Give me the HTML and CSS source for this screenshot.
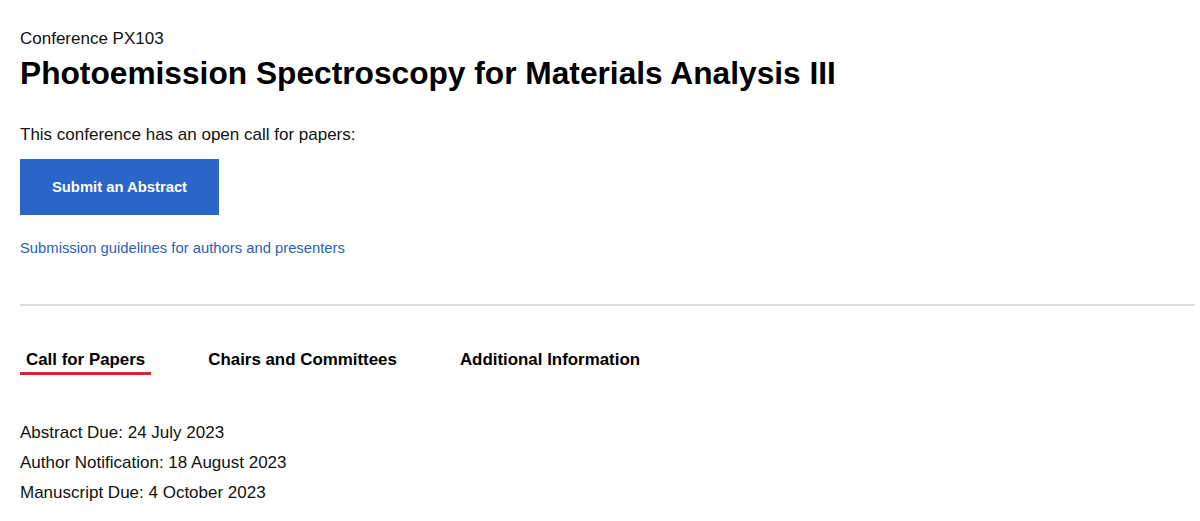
FILE: index.html
```html
<!DOCTYPE html>
<html lang="en">
<head>
<meta charset="utf-8">
<title>Photoemission Spectroscopy for Materials Analysis III</title>
<link rel="stylesheet" href="styles.css">
</head>
<body>
<main class="page">
  <header class="head">
    <div class="code">Conference PX103</div>
    <h1 class="title">Photoemission Spectroscopy for Materials Analysis III</h1>
  </header>
  <section class="cfp">
    <p class="open">This conference has an open call for papers:</p>
    <a class="btn" href="#">Submit an Abstract</a>
    <a class="guide" href="#">Submission guidelines for authors and presenters</a>
  </section>
  <hr class="rule">
  <nav class="tabs">
    <a class="tab active" href="#">Call for Papers</a>
    <a class="tab" href="#">Chairs and Committees</a>
    <a class="tab" href="#">Additional Information</a>
  </nav>
  <ul class="dates">
    <li>Abstract Due: 24 July 2023</li>
    <li>Author Notification: 18 August 2023</li>
    <li>Manuscript Due: 4 October 2023</li>
  </ul>
</main>
</body>
</html>
```

FILE: styles.css
```css
* { box-sizing: border-box; }
html, body { margin: 0; padding: 0; background: #fff; }
body {
  font-family: "Liberation Sans", Arial, Helvetica, sans-serif;
  color: #111;
}
.page {
  padding: 29px 5px 0 20px;
}
.head { display: flex; flex-direction: column; }
.code {
  font-size: 17px;
  line-height: 20px;
}
.title {
  margin: 5px 0 0;
  font-size: 31.7px;
  line-height: 38px;
  font-weight: 700;
  color: #000;
}
.cfp {
  display: flex;
  flex-direction: column;
  align-items: flex-start;
  margin-top: 33px;
}
.open {
  margin: 0;
  font-size: 17px;
  line-height: 20px;
}
.btn {
  margin-top: 14px;
  width: 199px;
  height: 56px;
  display: flex;
  align-items: center;
  justify-content: center;
  background: #2a66c8;
  color: #fff;
  font-weight: 700;
  font-size: 14.8px;
  text-decoration: none;
}
.guide {
  margin-top: 24px;
  font-size: 14.8px;
  line-height: 18px;
  color: #2a5fb4;
  text-decoration: none;
}
.rule {
  margin: 47px 0 0;
  border: 0;
  height: 2px;
  background: #dcdcdc;
}
.tabs {
  display: flex;
  gap: 51px;
  margin-top: 44px;
}
.tab {
  padding: 0 6px 2px;
  font-size: 16.9px;
  line-height: 20px;
  font-weight: 700;
  color: #000;
  text-decoration: none;
  border-bottom: 3px solid transparent;
}
.tab.active { border-bottom-color: #d7262e; }
.dates {
  list-style: none;
  margin: 43px 0 0;
  padding: 0;
  font-size: 17px;
  line-height: 30px;
}
```
